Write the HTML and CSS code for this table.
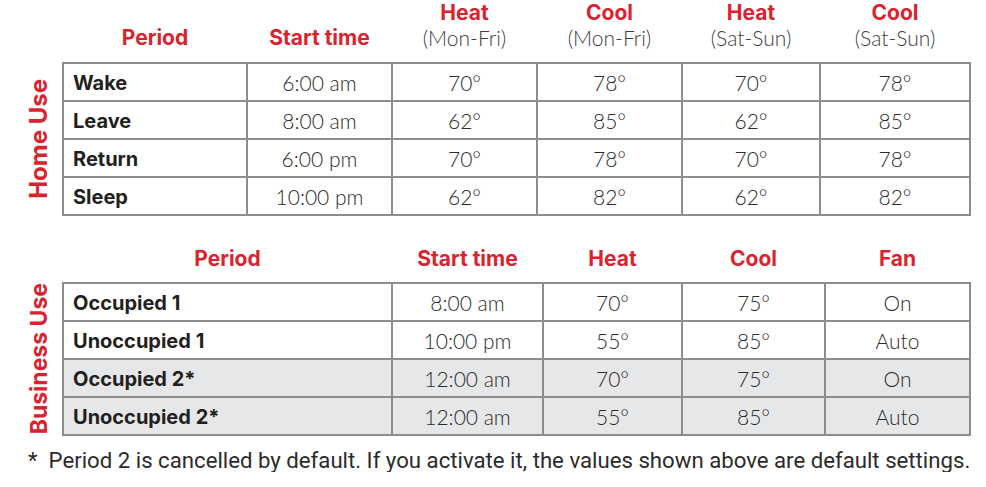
FILE: index.html
```html
<!DOCTYPE html>
<html lang="en">
<head>
<meta charset="utf-8">
<title>Schedule defaults</title>
<link rel="stylesheet" href="styles.css">
</head>
<body>
<main class="page">
  <section class="block home">
    <div class="row head-row">
      <div class="side"></div>
      <div class="grid head-grid">
        <div class="hd"><b>Period</b></div>
        <div class="hd"><b>Start time</b></div>
        <div class="hd"><b>Heat</b><span>(Mon-Fri)</span></div>
        <div class="hd"><b>Cool</b><span>(Mon-Fri)</span></div>
        <div class="hd"><b>Heat</b><span>(Sat-Sun)</span></div>
        <div class="hd"><b>Cool</b><span>(Sat-Sun)</span></div>
      </div>
    </div>
    <div class="row">
      <div class="side"><span class="vlabel">Home Use</span></div>
      <div class="grid body-grid">
        <div class="c name">Wake</div><div class="c">6:00 am</div><div class="c">70°</div><div class="c">78°</div><div class="c">70°</div><div class="c">78°</div>
        <div class="c name">Leave</div><div class="c">8:00 am</div><div class="c">62°</div><div class="c">85°</div><div class="c">62°</div><div class="c">85°</div>
        <div class="c name">Return</div><div class="c">6:00 pm</div><div class="c">70°</div><div class="c">78°</div><div class="c">70°</div><div class="c">78°</div>
        <div class="c name">Sleep</div><div class="c">10:00 pm</div><div class="c">62°</div><div class="c">82°</div><div class="c">62°</div><div class="c">82°</div>
      </div>
    </div>
  </section>

  <section class="block business">
    <div class="row head-row">
      <div class="side"></div>
      <div class="grid head-grid">
        <div class="hd"><b>Period</b></div>
        <div class="hd"><b>Start time</b></div>
        <div class="hd"><b>Heat</b></div>
        <div class="hd"><b>Cool</b></div>
        <div class="hd"><b>Fan</b></div>
      </div>
    </div>
    <div class="row">
      <div class="side"><span class="vlabel">Business Use</span></div>
      <div class="grid body-grid">
        <div class="c name">Occupied 1</div><div class="c">8:00 am</div><div class="c">70°</div><div class="c">75°</div><div class="c">On</div>
        <div class="c name">Unoccupied 1</div><div class="c">10:00 pm</div><div class="c">55°</div><div class="c">85°</div><div class="c">Auto</div>
        <div class="c name shade">Occupied 2*</div><div class="c shade">12:00 am</div><div class="c shade">70°</div><div class="c shade">75°</div><div class="c shade">On</div>
        <div class="c name shade">Unoccupied 2*</div><div class="c shade">12:00 am</div><div class="c shade">55°</div><div class="c shade">85°</div><div class="c shade">Auto</div>
      </div>
    </div>
  </section>

  <p class="note">*&nbsp; Period 2 is cancelled by default. If you activate it, the values shown above are default settings.</p>
</main>
</body>
</html>
```

FILE: styles.css
```css
* { box-sizing: border-box; }

html, body {
  margin: 0;
  padding: 0;
  background: #ffffff;
}

body {
  font-family: Inter, "Noto Sans", sans-serif;
  color: #231f20;
}

.page {
  width: 986px;
}

.row {
  display: flex;
  align-items: stretch;
}

.side {
  width: 62px;
  flex: none;
  contain: size;
  display: flex;
  justify-content: flex-end;
  align-items: center;
  padding-right: 11px;
}

.vlabel {
  writing-mode: vertical-rl;
  transform: rotate(180deg);
  color: #d9232e;
  font-weight: 700;
  font-size: 24px;
  line-height: 24px;
  white-space: nowrap;
}

.business .vlabel { font-size: 23px; }

.grid {
  display: grid;
  column-gap: 2px;
}

.home .grid { grid-template-columns: 182px 143px 143px 143px 136px 148px; }
.business .grid { grid-template-columns: 327px 149px 137px 141px 143px; }

.head-grid {
  padding: 0 2px;
}

.body-grid {
  row-gap: 2px;
  grid-auto-rows: 36px;
  background: #8d8d8d;
  border: 2px solid #8d8d8d;
}

.hd {
  display: flex;
  flex-direction: column;
  align-items: center;
  justify-content: flex-end;
  font-size: 21px;
  line-height: 25px;
}

.hd b {
  color: #d9232e;
  font-weight: 700;
  font-size: 21px;
}

.hd span {
  font-family: Lato, Inter, sans-serif;
  color: #3d3d3d;
  font-weight: 300;
  font-size: 21px;
}

.home .head-row { height: 62px; }
.home .hd { padding-bottom: 12px; }

.business { margin-top: 29px; }
.business .head-row { height: 37px; }
.business .hd { padding-bottom: 11px; }

.c {
  background: #ffffff;
  display: flex;
  align-items: center;
  justify-content: center;
  font-family: Lato, Inter, sans-serif;
  font-size: 21px;
  font-weight: 300;
  color: #2b2b2b;
  padding-top: 1px;
}

.c.name {
  font-family: Inter, "Noto Sans", sans-serif;
  justify-content: flex-start;
  padding-left: 9px;
  font-size: 20px;
  font-weight: 700;
  color: #231f20;
}

.c.shade { background: #e6e7e8; }

.note {
  margin: 12px 0 0 28px;
  font-family: Roboto, "Noto Sans", sans-serif;
  font-size: 22.2px;
  line-height: 24px;
  color: #2b2b2b;
  white-space: nowrap;
}
```
